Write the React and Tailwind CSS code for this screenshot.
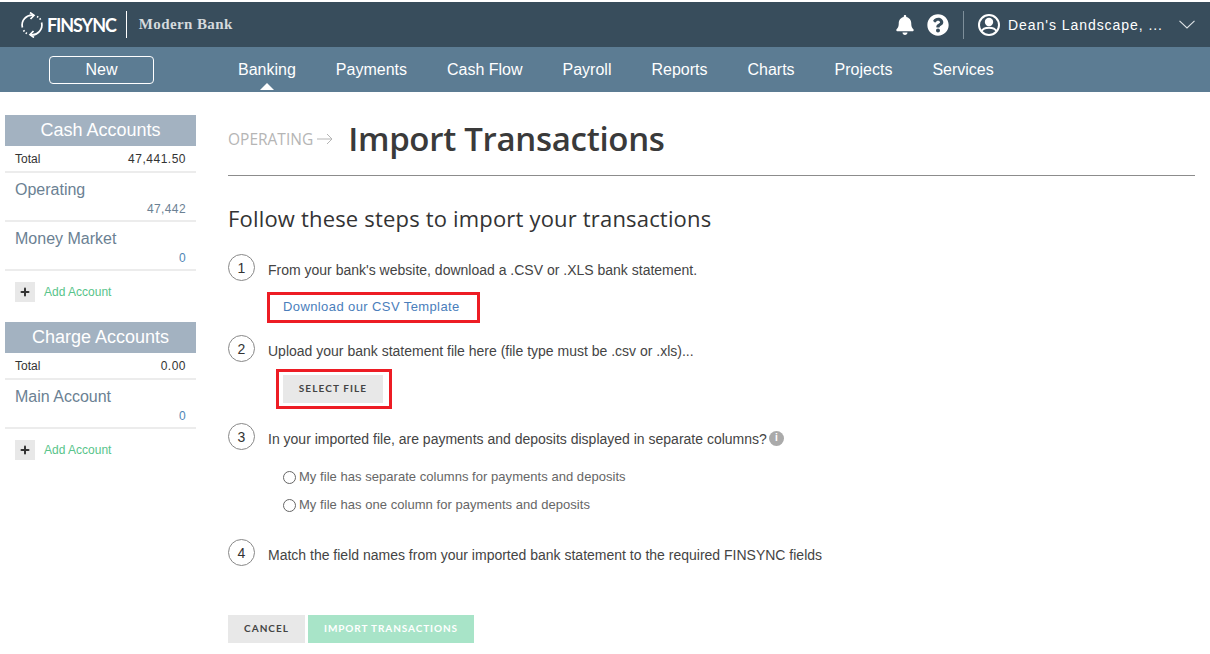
import React from "react";
import { FaBell, FaQuestionCircle } from "react-icons/fa";
import { Plus } from "lucide-react";

const navLinks = ["Banking", "Payments", "Cash Flow", "Payroll", "Reports", "Charts", "Projects", "Services"];

const LogoMark = () => (
  <svg width="24" height="26" viewBox="0 0 24 26" fill="none" stroke="white" strokeWidth="1.7">
    <path d="M2.4 15.5 A10 10 0 0 1 13.5 3.2" />
    <path d="M10 0.5 L14 3.4 L10.5 7" />
    <path d="M21.6 10.5 A10 10 0 0 1 10.5 22.8" />
    <path d="M14 25.5 L10 22.6 L13.5 19" />
    <path d="M17 4.4 A10 10 0 0 1 21.4 9" strokeDasharray="1.5 1.8" />
    <path d="M7 21.6 A10 10 0 0 1 2.9 17" strokeDasharray="1.5 1.8" />
  </svg>
);

const Account = ({ name, value, valueClass }) => (
  <div className="h-[49px] border-b-2 border-[#ececec] px-2.5 pt-[7px]">
    <div className="text-base leading-5 text-[#6b8193]">{name}</div>
    <div className={`mt-[1px] text-right text-xs leading-4 tracking-[0.4px] ${valueClass}`}>{value}</div>
  </div>
);

const AddAccount = () => (
  <div className="mt-[11px] flex h-5 items-center pl-2.5">
    <span className="flex h-5 w-5 items-center justify-center bg-[#e8e8e8] text-[#333]">
      <Plus size={12} strokeWidth={4} />
    </span>
    <span className="ml-[9px] text-xs text-[#58c48a]">Add Account</span>
  </div>
);

const Step = ({ n, children }) => (
  <div className="flex h-[27px] items-center gap-[13px]">
    <span className="flex h-[27px] w-[27px] shrink-0 items-center justify-center rounded-full border border-[#888] text-sm text-[#333]">
      {n}
    </span>
    <div className="mt-1 flex items-center text-sm text-[#444]">{children}</div>
  </div>
);

const Radio = ({ label }) => (
  <label className="flex h-4 items-center pl-[55px] text-[13px] tracking-[0.04px] text-[#666]">
    <span className="mr-[3px] h-[13px] w-[13px] rounded-full border border-[#666]" />
    {label}
  </label>
);

export default function App() {
  return (
    <div className="min-h-[654px] bg-white font-['Liberation_Sans',sans-serif]">
      <header className="mt-[2px] flex h-[45px] items-center bg-[#384d5c] pl-5 pr-[15px] text-white">
        <LogoMark />
        <span className="ml-[3px] font-['Lato',sans-serif] text-lg font-bold tracking-[-1.1px]">FINSYNC</span>
        <span className="ml-[10px] h-[27px] w-px bg-white" />
        <span className="ml-3 font-['Liberation_Serif',serif] text-[15px] font-bold tracking-[0.4px] text-[#d5dadd]">Modern Bank</span>

        <FaBell className="ml-auto" size={20} />
        <FaQuestionCircle className="ml-3" size={22} />
        <span className="ml-[14px] h-7 w-px bg-[#7e8f9a]" />
        <svg className="ml-[14px]" width="22" height="22" viewBox="0 0 22 22" fill="none" stroke="white" strokeWidth="2">
          <circle cx="11" cy="11" r="10" />
          <circle cx="11" cy="8" r="4.2" fill="white" stroke="none" />
          <path d="M3.5 17.5 C5.5 12.5 16.5 12.5 18.5 17.5" strokeWidth="1.8" />
        </svg>
        <span className="ml-2 w-[155px] whitespace-nowrap text-sm tracking-[0.95px]">Dean's Landscape, ...</span>
        <svg className="ml-4" width="16" height="9" viewBox="0 0 16 9" fill="none" stroke="#dfe4e7" strokeWidth="1.1">
          <path d="M0.5 0.8 L8 8 L15.5 0.8" />
        </svg>
      </header>

      <nav className="flex h-[45px] items-center bg-[#5c7c93] text-white">
        <button className="ml-[49px] h-7 w-[105px] rounded border border-white text-base">New</button>
        <ul className="ml-[84px] flex gap-10">
          {navLinks.map((link, index) => (
            <li key={index} className="relative text-base">
              {link}
              {link === "Banking" && (
                <span className="absolute left-1/2 top-[25px] h-0 w-0 -translate-x-1/2 border-x-[7px] border-b-[7px] border-x-transparent border-b-white" />
              )}
            </li>
          ))}
        </ul>
      </nav>

      <div className="flex">
        <aside className="ml-[5px] w-[191px] shrink-0 pt-[23px]">
          <h2 className="bg-[#a3b2c1] text-center text-lg leading-[31px] text-white">Cash Accounts</h2>
          <div className="flex h-[27px] items-center justify-between border-b-2 border-[#ececec] px-2.5 text-xs text-[#333]">
            <span>Total</span>
            <span className="tracking-[0.5px]">47,441.50</span>
          </div>
          <Account name="Operating" value="47,442" valueClass="text-[#6b8193]" />
          <Account name="Money Market" value="0" valueClass="text-[#4f86b5]" />
          <AddAccount />

          <h2 className="mt-5 bg-[#a3b2c1] text-center text-lg leading-[31px] text-white">Charge Accounts</h2>
          <div className="flex h-[27px] items-center justify-between border-b-2 border-[#ececec] px-2.5 text-xs text-[#333]">
            <span>Total</span>
            <span className="tracking-[0.5px]">0.00</span>
          </div>
          <Account name="Main Account" value="0" valueClass="text-[#4f86b5]" />
          <AddAccount />
        </aside>

        <main className="ml-8 mr-[15px] flex-1">
          <div className="flex h-[84px] items-center border-b border-[#8c8c8c] pt-[11px]">
            <span className="mt-[2px] font-['Open_Sans',sans-serif] text-[15.5px] text-[#b5b5b5]">OPERATING</span>
            <svg className="ml-1" width="16" height="12" viewBox="0 0 16 12" fill="none" stroke="#b5b5b5" strokeWidth="1">
              <path d="M0 6 H15 M10 1 L15 6 L10 11" />
            </svg>
            <h1 className="ml-[15px] font-['Open_Sans',sans-serif] text-[33px] font-semibold tracking-[-0.3px] text-[#3a3a3a]">Import Transactions</h1>
          </div>
          <h2 className="mt-7 font-['Open_Sans',sans-serif] text-[22px] leading-[28px] tracking-[0.18px] text-[#333]">Follow these steps to import your transactions</h2>

          <div className="mt-[22px]">
            <Step n={1}>From your bank's website, download a .CSV or .XLS bank statement.</Step>
          </div>
          <a className="ml-[39px] mt-[11px] flex h-[31px] w-[213px] items-center border-[3px] border-[#ed1c24] pb-[2px] pl-[13px] text-[13px] tracking-[0.4px] text-[#4a7ebb]">
            Download our CSV Template
          </a>
          <div className="mt-3">
            <Step n={2}>Upload your bank statement file here (file type must be .csv or .xls)...</Step>
          </div>
          <div className="ml-12 mt-[7px] w-[116px] border-[3px] border-[#ed1c24] py-[3px] pl-1 pr-1.5">
            <button className="block h-7 w-full bg-[#e8e8e8] pb-[2px] font-['Lato',sans-serif] text-[10px] font-bold tracking-[1.1px] text-[#444]">SELECT FILE</button>
          </div>
          <div className="mt-[14px]">
            <Step n={3}>
              In your imported file, are payments and deposits displayed in separate columns?
              <span className="ml-[2px] flex h-[15px] w-[15px] items-center justify-center rounded-full bg-[#aaa] text-[10px] font-bold text-white">i</span>
            </Step>
          </div>
          <div className="mt-[19px] flex flex-col gap-3">
            <Radio label="My file has separate columns for payments and deposits" />
            <Radio label="My file has one column for payments and deposits" />
          </div>
          <div className="mt-[26px]">
            <Step n={4}>Match the field names from your imported bank statement to the required FINSYNC fields</Step>
          </div>
          <div className="mt-[49px] flex gap-[3px]">
            <button className="h-7 w-[77px] bg-[#e8e8e8] pb-[2px] font-['Lato',sans-serif] text-[10px] font-bold tracking-[1px] text-[#444]">CANCEL</button>
            <button className="h-7 w-[166px] bg-[#a8e4c8] pb-[2px] font-['Lato',sans-serif] text-[10px] font-bold tracking-[0.9px] text-white">IMPORT TRANSACTIONS</button>
          </div>
        </main>
      </div>
    </div>
  );
}
